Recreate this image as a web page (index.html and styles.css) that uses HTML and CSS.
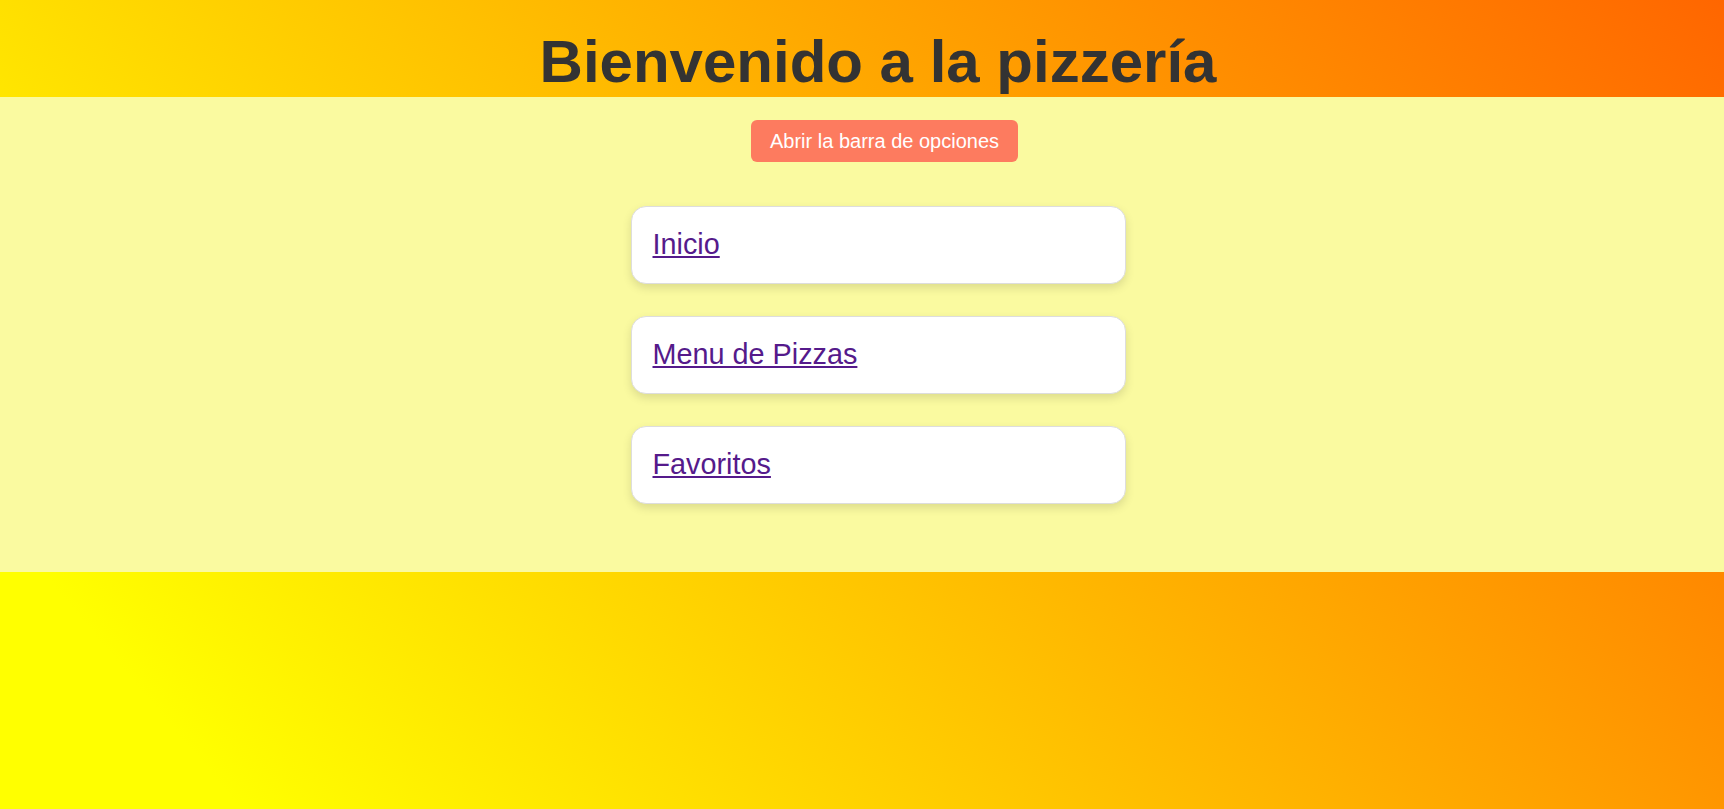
FILE: index.html
```html
<!DOCTYPE html>
<html lang="es">
<head>
<meta charset="utf-8">
<title>Pizzería</title>
<link rel="stylesheet" href="styles.css">
</head>
<body>
<header class="site-header">
  <h1 class="title">Bienvenido a la pizzería</h1>
</header>
<section class="options">
  <button class="toggle-btn" type="button">Abrir la barra de opciones</button>
  <nav class="menu">
    <div class="card"><a class="card-link" href="#inicio">Inicio</a></div>
    <div class="card"><a class="card-link" href="#menu">Menu de Pizzas</a></div>
    <div class="card"><a class="card-link" href="#favoritos">Favoritos</a></div>
  </nav>
</section>
</body>
</html>
```

FILE: styles.css
```css
html, body {
  margin: 0;
  padding: 0;
}

body {
  min-height: 100vh;
  font-family: "Liberation Sans", Arial, sans-serif;
  background: linear-gradient(50deg, #ffff00 10%, #ff6600 100%);
}

.site-header {
  height: 97px;
  box-sizing: border-box;
  padding: 32px 0 0 32px;
}

.title {
  margin: 0;
  font-size: 60px;
  line-height: 60px;
  font-weight: bold;
  color: #333333;
  text-align: center;
}

.options {
  background: #fafaa0;
  height: 475px;
  box-sizing: border-box;
  padding: 23px 0 0 32px;
  display: flex;
  flex-direction: column;
  align-items: center;
}

.toggle-btn {
  margin-left: 13px;
  background: #fd7b5f;
  color: #ffffff;
  border: none;
  border-radius: 6px;
  padding: 9.5px 19px;
  font-family: "Liberation Sans", Arial, sans-serif;
  font-size: 20px;
  line-height: 23px;
}

.menu {
  margin-top: 43.5px;
  display: flex;
  flex-direction: column;
  gap: 32px;
}

.card {
  width: 495px;
  box-sizing: border-box;
  background: #ffffff;
  border: 1px solid #dddddd;
  border-radius: 15px;
  padding: 21.5px 21px;
  box-shadow: 0 4px 10px rgba(0, 0, 0, 0.12);
}

.card-link {
  font-size: 28.8px;
  color: #551a8b;
  text-decoration: underline;
}
```
